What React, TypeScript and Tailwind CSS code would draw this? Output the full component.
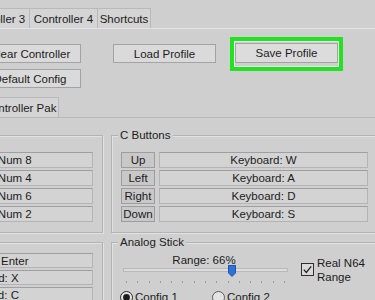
import React from "react";

const boxCls =
  "flex items-center justify-center border border-[#b4b4b4] border-t-[#9f9f9f] bg-[#d3d3d3] whitespace-nowrap";
const btnCls =
  "h-[19px] flex items-center justify-center border border-[#a3a3a3] bg-[#dadada] whitespace-nowrap";
const groupCls =
  "border border-[#b3b3b3] shadow-[inset_1px_1px_0_#e2e2e2,1px_1px_0_#e2e2e2]";

function Radio({ on }: { on?: boolean }) {
  return (
    <svg width="13" height="13" viewBox="0 0 13 13" className="shrink-0">
      <circle cx="6.5" cy="6.5" r="6" fill="#e4e4e4" stroke={on ? "#2a2a2a" : "#5a5a5a"} strokeWidth="1" />
      {on && <circle cx="6.5" cy="6.5" r="3.4" fill="#1c1c1c" />}
    </svg>
  );
}

function CButtonRow({ label, value }: { label: string; value: string }) {
  return (
    <div className="flex gap-[4px]">
      <div className="w-[34px] h-[16px] flex items-center justify-center border border-[#9d9d9d] bg-[#c8c8c8]">
        {label}
      </div>
      <div className={`w-[209px] h-[16px] ${boxCls}`}>{value}</div>
    </div>
  );
}

export default function App() {
  const ticks = Array.from({ length: 15 });
  return (
    <div className="w-[375px] h-[300px] overflow-hidden bg-[#cfcfcf] font-['Liberation_Sans',Arial,sans-serif] text-[11.5px] leading-[14px] text-[#1c1c1c]">
      {/* top tab strip */}
      <div className="flex pt-[8px] ml-[-39px]">
        <div className="w-[69px] h-[20px] flex items-center justify-center border-t border-l border-r border-[#b9b9b9] bg-[#d4d4d4] whitespace-nowrap">
          Controller 3
        </div>
        <div className="w-[68px] h-[20px] flex items-center justify-center border-t border-r border-[#b9b9b9] bg-[#d4d4d4] whitespace-nowrap">
          Controller 4
        </div>
        <div className="w-[53px] h-[20px] flex items-center justify-center border-t border-r border-[#b9b9b9] bg-[#d4d4d4] whitespace-nowrap">
          Shortcuts
        </div>
      </div>

      {/* panel */}
      <div className="border-t border-[#e4e4e4]">
        {/* buttons */}
        <div className="flex items-start mt-[8px] ml-[-21px]">
          <div className="flex flex-col gap-[6px] mt-[7px]">
            <div className={`w-[102px] ${btnCls}`}>Clear Controller</div>
            <div className={`w-[102px] ${btnCls}`}>Default Config</div>
          </div>
          <div className={`w-[103px] ml-[32px] mt-[7px] ${btnCls}`}>Load Profile</div>
          <div className="ml-[14px] w-[113px] h-[34px] border-[4px] border-[#22e322]">
            <div className="h-full border border-[#f0f0f0] pt-[1px]">
              <div className="h-[20px] flex items-center justify-center border border-[#a3a3a3] bg-[#dcdcdc]">
                Save Profile
              </div>
            </div>
          </div>
        </div>

        {/* inner tab strip */}
        <div className="mt-[9px] border-b border-[#b9b9b9]">
          <div className="ml-[-19px] w-[78px] h-[20px] flex items-center justify-center border-t border-l border-r border-[#b9b9b9] bg-[#d4d4d4] whitespace-nowrap">
            Controller Pak
          </div>
        </div>

        {/* groups */}
        <div className="flex mt-[17px]">
          <div className="flex flex-col ml-[-130px] w-[233px] shrink-0">
            <div className={`h-[98px] pt-[16px] pl-[10px] flex flex-col gap-[2px] ${groupCls}`}>
              <div className={`w-[212px] h-[16px] ${boxCls}`}>Keyboard: Num 8</div>
              <div className={`w-[212px] h-[16px] ${boxCls}`}>Keyboard: Num 4</div>
              <div className={`w-[212px] h-[16px] ${boxCls}`}>Keyboard: Num 6</div>
              <div className={`w-[212px] h-[16px] ${boxCls}`}>Keyboard: Num 2</div>
            </div>
            <div className={`mt-[9px] h-[80px] pt-[10px] pl-[10px] flex flex-col gap-[2px] ${groupCls}`}>
              <div className={`w-[212px] h-[15px] ${boxCls}`}>Keyboard: Enter</div>
              <div className={`w-[212px] h-[15px] ${boxCls}`}>Keyboard: X</div>
              <div className={`w-[212px] h-[15px] ${boxCls}`}>Keyboard: C</div>
            </div>
          </div>

          <div className="flex flex-col ml-[8px] w-[266px] shrink-0">
            <div className={`h-[98px] ${groupCls}`}>
              <div className="-mt-[8px] ml-[6px] px-[2px] w-fit bg-[#cfcfcf]">C Buttons</div>
              <div className="mt-[10px] pl-[9px] flex flex-col gap-[2px]">
                <CButtonRow label="Up" value="Keyboard: W" />
                <CButtonRow label="Left" value="Keyboard: A" />
                <CButtonRow label="Right" value="Keyboard: D" />
                <CButtonRow label="Down" value="Keyboard: S" />
              </div>
            </div>
            <div className={`mt-[9px] h-[80px] ${groupCls}`}>
              <div className="-mt-[8px] ml-[6px] px-[2px] w-fit bg-[#cfcfcf]">Analog Stick</div>
              <div className="flex mt-[4px]">
                <div className="ml-[11px] w-[165px] flex flex-col">
                  <div className="h-[14px] text-center pr-[3px]">Range: 66%</div>
                  <div className="relative h-[12px]">
                    <div className="mt-[1px] h-[4px] border border-[#b9b9b9] bg-[#dcdcdc]" />
                    <svg
                      width="8"
                      height="12"
                      viewBox="0 0 8 12"
                      className="absolute left-[105px] top-[-2px]"
                    >
                      <path d="M0.5 0.5 H7.5 V8 L4 11.5 L0.5 8 Z" fill="#2f72d6" stroke="#1d55ad" strokeWidth="1" />
                    </svg>
                  </div>
                  <div className="mt-[2px] h-[2px] px-[3px] flex justify-between">
                    {ticks.map((_, i) => (
                      <div key={i} className="w-px h-[2px] bg-[#9a9a9a]" />
                    ))}
                  </div>
                </div>
                <div className="ml-[13px] mt-[3px] flex items-start gap-[3px]">
                  <svg width="13" height="13" viewBox="0 0 13 13" className="mt-[7px] shrink-0">
                    <rect x="0.5" y="0.5" width="12" height="12" fill="#dadada" stroke="#2f2f2f" strokeWidth="1" />
                    <path d="M2.8 6.6 L5.3 9.4 L10.2 3.4" fill="none" stroke="#222" strokeWidth="1.3" />
                  </svg>
                  <div className="leading-[14px]">
                    Real N64
                    <br />
                    Range
                  </div>
                </div>
              </div>
              <div className="flex items-center ml-[8px] mt-[6px]">
                <div className="w-[92px] flex items-center gap-[2px]">
                  <Radio on />
                  <span>Config 1</span>
                </div>
                <div className="flex items-center gap-[2px]">
                  <Radio />
                  <span>Config 2</span>
                </div>
              </div>
            </div>
          </div>
        </div>
      </div>
    </div>
  );
}
